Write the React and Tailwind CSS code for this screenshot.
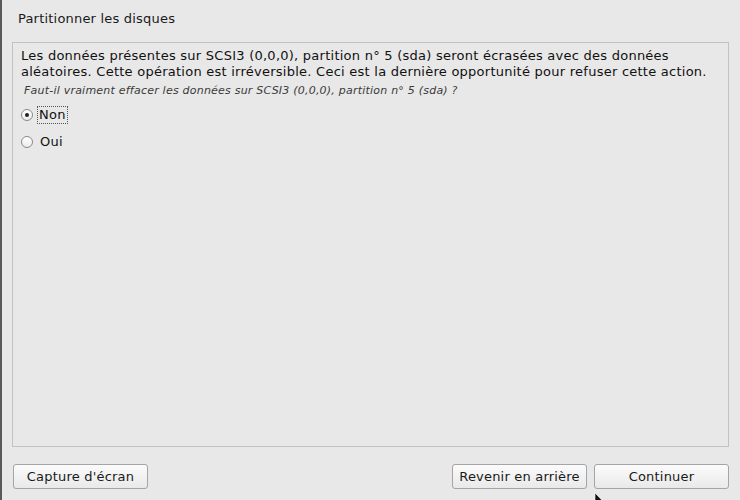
const Radio = ({ checked, label, focused }) => (
  <div className="flex items-center h-[18px]">
    <span className="w-[12px] h-[12px] rounded-full border border-[#8a8a8a] bg-gradient-to-b from-[#ffffff] to-[#ececec] flex items-center justify-center">
      {checked && <span className="w-[4px] h-[4px] rounded-full bg-[#222]"></span>}
    </span>
    <span
      className={
        focused
          ? 'ml-[4px] px-[1px] border border-dotted border-[#555] text-[13px] leading-[16px] tracking-[0.3px] text-[#111]'
          : 'ml-[5px] px-[1px] border border-transparent text-[13px] leading-[16px] tracking-[0.3px] text-[#111]'
      }
    >
      {label}
    </span>
  </div>
);

const Btn = ({ children, className }) => (
  <button
    className={
      'h-[25px] rounded-[3px] border border-[#a5a5a5] bg-gradient-to-b from-[#fbfbfb] to-[#e9e9e9] text-[13px] tracking-[0.2px] text-[#1a1a1a] ' +
      className
    }
  >
    {children}
  </button>
);

export default function App() {
  return (
    <div
      className="w-[740px] h-[500px] bg-[#e8e8e8] border-l-2 border-[#5a5a5a] flex flex-col relative overflow-hidden"
      style={{ fontFamily: '"DejaVu Sans", sans-serif' }}
    >
      <div className="pl-[16px] pt-[9px] h-[42px] text-[13px] tracking-[0.2px] text-[#1a1a1a]">Partitionner les disques</div>

      <div className="ml-[10px] w-[717px] h-[405px] border border-[#c2c2c2] px-[8px] pt-[5px]">
        <p className="text-[13px] leading-[16px] tracking-[0.25px] text-[#111]">
          Les données présentes sur SCSI3 (0,0,0), partition n° 5 (sda) seront écrasées avec des données
          <br />
          aléatoires. Cette opération est irréversible. Ceci est la dernière opportunité pour refuser cette action.
        </p>
        <p className="mt-[3px] ml-[3px] text-[11px] leading-[15px] tracking-[0.22px] italic text-[#3a3a3a] font-light">
          Faut-il vraiment effacer les données sur SCSI3 (0,0,0), partition n° 5 (sda) ?
        </p>
        <div className="mt-[8px] flex flex-col gap-[9px]">
          <Radio checked label="Non" focused />
          <Radio label="Oui" />
        </div>
      </div>

      <div className="mt-[17px] flex items-center pl-[11px] pr-[11px]">
        <Btn className="w-[135px]">Capture d'écran</Btn>
        <div className="flex-1"></div>
        <Btn className="w-[135px]">Revenir en arrière</Btn>
        <Btn className="w-[135px] ml-[7px]">Continuer</Btn>
      </div>

      <svg className="absolute left-[592px] top-[493px]" width="10" height="14" viewBox="0 0 10 14">
        <path d="M1 0 L1 11 L3.5 8.5 L6 13 L7.5 12.3 L5 7.8 L8.5 7.8 Z" fill="#111" stroke="#fff" strokeWidth="0.6" />
      </svg>
    </div>
  );
}
